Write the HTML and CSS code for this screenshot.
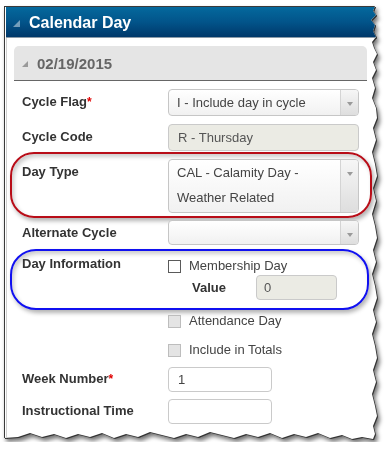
FILE: index.html
```html
<!DOCTYPE html>
<html lang="en">
<head>
  <meta charset="utf-8">
  <link rel="stylesheet" href="styles.css">
  <title>Calendar Day</title>
</head>
<body>
  <div class="paper">
    <div class="sheet">
      <div class="window">
        <div class="title-bar">
          <svg class="corner" width="7" height="7" viewBox="0 0 7 7"><polygon points="7,0 7,7 0,7"/></svg>
          <span class="title-text">Calendar Day</span>
        </div>
        <div class="content">
          <div class="panel-head">
            <svg class="corner-sm" width="6" height="6" viewBox="0 0 6 6"><polygon points="6,0 6,6 0,6"/></svg>
            <span>02/19/2015</span>
          </div>

          <div class="form">
            <div class="row">
              <label class="field-label">Cycle Flag<span class="req">*</span></label>
              <div class="select">
                <span class="select-text">I - Include day in cycle</span>
                <span class="select-arrow"></span>
              </div>
            </div>

            <div class="row">
              <label class="field-label">Cycle Code</label>
              <div class="text-input readonly tall">R - Thursday</div>
            </div>

            <div class="callout red">
              <div class="row">
                <label class="field-label">Day Type</label>
                <div class="select">
                  <span class="select-text multi">CAL - Calamity Day -<br>Weather Related</span>
                  <span class="select-arrow"></span>
                </div>
              </div>
            </div>

            <div class="row">
              <label class="field-label">Alternate Cycle</label>
              <div class="select short">
                <span class="select-text">&nbsp;</span>
                <span class="select-arrow"></span>
              </div>
            </div>

            <div class="callout blue">
              <div class="row">
                <label class="field-label flat">Day Information</label>
                <div class="checks">
                  <div class="check"><input type="checkbox" class="box"> Membership Day</div>
                  <div class="value-row">
                    <span class="value-label">Value</span>
                    <div class="text-input readonly value">0</div>
                  </div>
                </div>
              </div>
            </div>

            <div class="row check-row">
              <span></span>
              <div class="check"><input type="checkbox" class="box" disabled> Attendance Day</div>
            </div>

            <div class="row check-row last-check">
              <span></span>
              <div class="check"><input type="checkbox" class="box" disabled> Include in Totals</div>
            </div>

            <div class="row week">
              <label class="field-label small">Week Number<span class="req">*</span></label>
              <div class="text-input narrow">1</div>
            </div>

            <div class="row">
              <label class="field-label small">Instructional Time</label>
              <div class="text-input narrow"></div>
            </div>
          </div>
        </div>
      </div>
    </div>
  </div>
</body>
</html>
```

FILE: styles.css
```css
body {
  margin: 0;
  background-color: white;
  font-family: "Liberation Sans", Arial, sans-serif;
}

.paper {
  margin: 6px 0 0 4px;
  width: 380px;
  filter: drop-shadow(1px 1px 0 #333) drop-shadow(2px 3px 2px rgba(0, 0, 0, 0.55));
}

.sheet {
  width: 374px;
  height: 436px;
  box-sizing: border-box;
  background-color: white;
  border-left: 1px solid #3a3a3a;
  border-top: 1px solid #3a3a3a;
  padding-left: 1px;
  overflow: hidden;
  clip-path: polygon(0 0, 371px 0, 369px 5px, 372px 9px, 367px 14px, 371px 19px, 369px 25px, 372px 31px, 368px 36px, 370px 42px, 373px 48px, 369px 56px, 372px 64px, 368px 72px, 371px 82px, 368px 92px, 372px 102px, 373px 112px, 369px 122px, 372px 134px, 368px 146px, 371px 158px, 373px 170px, 369px 182px, 372px 195px, 368px 208px, 371px 220px, 373px 232px, 369px 244px, 372px 256px, 368px 268px, 371px 280px, 373px 292px, 369px 304px, 372px 316px, 368px 328px, 371px 340px, 373px 352px, 369px 364px, 372px 376px, 368px 388px, 371px 400px, 373px 410px, 369px 420px, 371px 428px, 369px 433px, 358px 431px, 348px 433px, 338px 429px, 326px 432px, 314px 427px, 302px 431px, 290px 428px, 278px 432px, 266px 427px, 254px 431px, 242px 428px, 230px 432px, 218px 429px, 206px 426px, 194px 431px, 182px 428px, 170px 432px, 158px 429px, 146px 426px, 134px 431px, 122px 428px, 110px 432px, 98px 427px, 86px 431px, 74px 428px, 62px 432px, 50px 428px, 38px 431px, 26px 427px, 14px 431px, 0 432px);
}

/* title */
.title-bar {
  height: 31px;
  display: flex;
  align-items: center;
  background: linear-gradient(to bottom, #04699d 0%, #02548a 50%, #00386a 100%);
  border-bottom: 1px solid #8a9aa8;
  box-sizing: border-box;
}
.corner {
  margin-left: 7px;
  margin-right: 9px;
  margin-top: 2px;
  fill: rgba(255, 255, 255, 0.45);
}
.title-text {
  color: white;
  font-weight: bold;
  font-size: 16px;
  line-height: 29px;
}

.content {
  border-left: 1px solid #cfcfcf;
  padding: 8px 0 0 7px;
  height: 420px;
}

.panel-head {
  width: 353px;
  height: 35px;
  box-sizing: border-box;
  background-color: #e5e5e5;
  border-bottom: 1px solid #666;
  border-radius: 5px 5px 0 0;
  display: flex;
  align-items: center;
  padding-left: 8px;
  color: #666;
  font-weight: bold;
  font-size: 15px;
}
.corner-sm {
  fill: #9a9a9a;
  margin-right: 9px;
  margin-top: 2px;
}

/* form */
.form {
  margin-top: 8px;
  padding-left: 8px;
  width: 337px;
}
.row {
  display: grid;
  grid-template-columns: 146px 191px;
  align-items: start;
  margin-bottom: 8px;
}
.field-label {
  font-weight: bold;
  font-size: 13px;
  line-height: 15px;
  color: #333;
  padding-top: 5px;
}
.field-label.small {
  padding-top: 4px;
}
.field-label.flat {
  padding-top: 0;
}
.req {
  color: #e00000;
  font-size: 12px;
}

.select {
  display: flex;
  border: 1px solid #c6c6c6;
  border-radius: 4px;
  background: linear-gradient(to bottom, #ffffff, #f1f1f1);
  color: #444;
  font-size: 13px;
  overflow: hidden;
}
.select-text {
  flex: 1;
  line-height: 25px;
  padding-left: 8px;
}
.select-text.multi {
  padding-bottom: 2px;
}
.select.short .select-text {
  line-height: 23px;
}
.select-arrow {
  width: 17px;
  border-left: 1px solid #d4d4d4;
  background: linear-gradient(to bottom, #f6f6f6, #dedede);
}
.select-arrow::after {
  content: "";
  display: block;
  width: 0;
  height: 0;
  margin: 12px auto 0;
  border-left: 3px solid transparent;
  border-right: 3px solid transparent;
  border-top: 4px solid #9a9a9a;
}

.text-input {
  box-sizing: border-box;
  height: 25px;
  border: 1px solid #cacaca;
  border-radius: 4px;
  padding-left: 9px;
  line-height: 23px;
  font-size: 13px;
  color: #444;
  background-color: white;
}
.text-input.tall {
  height: 27px;
  line-height: 25px;
}
.text-input.readonly {
  background-color: #ebebe4;
  color: #555;
}
.text-input.narrow {
  width: 104px;
}
.text-input.value {
  width: 81px;
  padding-left: 7px;
}

/* annotation outlines */
.callout {
  border: 2px solid;
  box-shadow: 2px 3px 4px rgba(0, 0, 0, 0.3), inset 2px 3px 4px rgba(0, 0, 0, 0.2);
}
.callout .row {
  margin-bottom: 0;
}
.callout.red {
  border-color: #b80d18;
  border-radius: 24px;
  margin: -7px -13px 2px -12px;
  padding: 5px 11px 3px 10px;
}
.callout.blue {
  border-color: #1010f0;
  border-radius: 26px;
  margin: -4px -10px 3px -12px;
  padding: 5px 8px 8px 10px;
}

/* checkboxes */
.checks {
  margin-top: 2px;
}
.check {
  display: flex;
  align-items: center;
  line-height: 16px;
  font-size: 13px;
  color: #444;
}
.box {
  appearance: none;
  -webkit-appearance: none;
  margin: 0 8px 0 0;
  width: 13px;
  height: 13px;
  box-sizing: border-box;
  border: 1px solid #5a5a5a;
  background-color: white;
}
.box:disabled {
  border-color: #bdbdbd;
  background-color: #e4e4e4;
}
.value-row {
  display: flex;
  align-items: center;
  margin-top: 1px;
  padding-left: 24px;
}
.value-label {
  width: 64px;
  font-weight: bold;
  font-size: 13px;
  color: #333;
}

.check-row {
  margin-bottom: 13px;
}
.check-row.last-check {
  margin-bottom: 9px;
}
.row.week {
  margin-bottom: 7px;
}
```
